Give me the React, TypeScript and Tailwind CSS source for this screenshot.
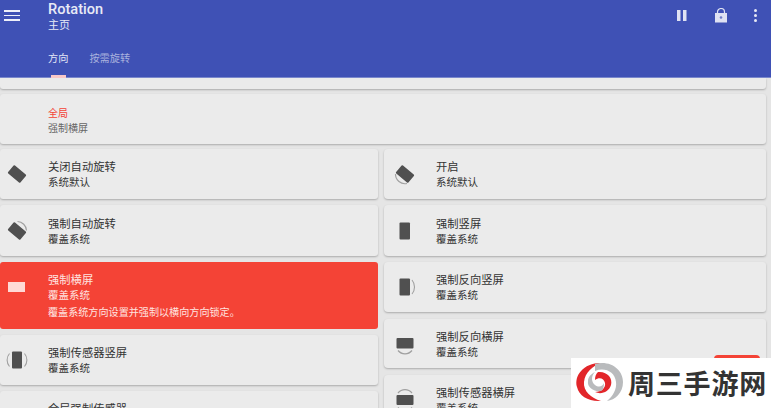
const font = { fontFamily: '"Roboto", "Noto Sans CJK SC", sans-serif' };

function Icon({ kind, light }: { kind: string; light?: boolean }) {
  const c = light ? "#ffd9d6" : "#505050";
  const arc = "#a0a0a0";
  const diamond = <rect x="4" y="6.75" width="16" height="10.5" rx="1" fill={c} transform="rotate(40 12 12)" />;
  return (
    <svg width="24" height="24" viewBox="0 0 24 24" className="shrink-0">
      {kind === "off" && diamond}
      {kind === "auto" && (
        <g>
          <path d="M12.5 2.5A9.5 9.5 0 0 1 21.5 11.5" fill="none" stroke={arc} strokeWidth="1.2" />
          {diamond}
        </g>
      )}
      {kind === "on" && (
        <g>
          <path d="M2.5 12A9.5 9.5 0 0 0 14 21.5" fill="none" stroke={arc} strokeWidth="1.2" />
          {diamond}
        </g>
      )}
      {kind === "land" && <rect x="3" y="7" width="17" height="10" fill={c} />}
      {kind === "port" && <rect x="6.5" y="3.5" width="10.5" height="17" rx="1" fill={c} />}
      {kind === "sport" && (
        <g>
          <rect x="7" y="3.5" width="10" height="17" rx="1" fill={c} />
          <path d="M4.5 5.5a10 10 0 0 0 0 13M19.5 5.5a10 10 0 0 1 0 13" fill="none" stroke={arc} strokeWidth="1.1" />
        </g>
      )}
      {kind === "rport" && (
        <g>
          <rect x="6.5" y="3.5" width="10.5" height="17" rx="1" fill={c} />
          <path d="M19 5a11 11 0 0 1 0 14" fill="none" stroke={arc} strokeWidth="1.1" />
        </g>
      )}
      {kind === "rland" && (
        <g>
          <rect x="3.5" y="6" width="17" height="10.5" rx="1" fill={c} />
          <path d="M5 18.5a9 9 0 0 0 14 0" fill="none" stroke={arc} strokeWidth="1.2" />
        </g>
      )}
      {kind === "sland" && (
        <g>
          <rect x="3.5" y="7" width="17" height="10" rx="1" fill={c} />
          <path d="M5 5a9 9 0 0 1 14 0M5 19.5a9 9 0 0 0 14 0" fill="none" stroke={arc} strokeWidth="1.2" />
        </g>
      )}
    </svg>
  );
}

function Card({
  icon, title, sub, desc, active, right, h,
}: { icon?: string; title: string; sub: string; desc?: string; active?: boolean; right?: boolean; h: string }) {
  return (
    <div
      className={`${h} shrink-0 rounded-[3px] flex flex-col justify-center overflow-hidden ${
        active ? "bg-[#f44336] text-[#ffe3e0]" : "bg-[#ebebeb] text-[#333333] shadow-[0_1px_2px_rgba(0,0,0,0.25)]"
      } ${right ? "rounded-l-[4px]" : ""}`}
    >
      <div className="flex items-center">
        <div className={`shrink-0 flex ${right ? "w-[52px] pl-[9px]" : "w-[48px] pl-[5px]"}`}>
          {icon && <Icon kind={icon} light={active} />}
        </div>
        <div className="flex flex-col pt-[2px]">
          <div className="text-[11.3px] leading-[15px]">{title}</div>
          <div className="text-[10.5px] leading-[15px]">{sub}</div>
        </div>
      </div>
      {desc && <div className="text-[10.1px] leading-[15px] mt-[2px] pl-[48px]">{desc}</div>}
    </div>
  );
}

export default function App() {
  return (
    <div className="relative w-[771px] h-[408px] overflow-hidden bg-[#e5e5e5] flex flex-col" style={font}>
      <header className="h-[78px] shrink-0 bg-[#3f51b5] border-b border-[#7a88cc] flex text-white relative z-10">
        <div className="w-[48px] shrink-0 pl-[4px] pt-[10px]">
          <div className="w-[16px] flex flex-col gap-[3px]">
            <div className="h-[1.5px] bg-[#eef0fa]" />
            <div className="h-[1.5px] bg-[#eef0fa]" />
            <div className="h-[1.5px] bg-[#eef0fa]" />
          </div>
        </div>
        <div className="flex-1 flex flex-col">
          <div className="text-[14.6px] leading-[16px] pt-[1px] font-medium text-[#e8eaf6]">Rotation</div>
          <div className="text-[11px] leading-[16px] mt-[1px] text-[#e8eaf6]">主页</div>
          <div className="flex gap-[21px] mt-[18px] text-[10.2px] leading-[14px]">
            <div className="relative text-[#e3e6f5]">
              方向
              <div className="absolute left-[3px] top-[23px] w-[15px] h-[3px] bg-[#f8c8c8]" />
            </div>
            <div className="text-[#aab2de]">按需旋转</div>
          </div>
        </div>
        <div className="flex items-start pt-[9px] pr-[14px]">
          <svg width="14" height="13" viewBox="0 0 14 13" className="mr-[25px]">
            <rect x="2" y="1" width="3.5" height="11" fill="#dfe2f3" />
            <rect x="8" y="1" width="3.5" height="11" fill="#dfe2f3" />
          </svg>
          <svg width="14" height="16" viewBox="0 0 14 16" className="mr-[26px] -mt-[1px]">
            <path d="M3.5 6V4a3.5 3.5 0 0 1 7 0V6" fill="none" stroke="#dfe2f3" strokeWidth="1.2" />
            <rect x="1" y="5" width="12" height="9.5" fill="#dfe2f3" />
            <circle cx="7" cy="9.5" r="1.3" fill="#6f7dc8" />
          </svg>
          <div className="flex flex-col gap-[2px]">
            <div className="w-[3px] h-[3px] rounded-full bg-[#e8eaf6]" />
            <div className="w-[3px] h-[3px] rounded-full bg-[#e8eaf6]" />
            <div className="w-[3px] h-[3px] rounded-full bg-[#e8eaf6]" />
          </div>
        </div>
      </header>

      <main className="flex-1 min-h-0 flex flex-col pr-[5px]">
        <div className="h-[11px] shrink-0 bg-[#ebebeb] rounded-b-[3px] shadow-[0_1px_2px_rgba(0,0,0,0.25)]" />
        <div className="h-[50px] shrink-0 mt-[5px] bg-[#ebebeb] rounded-[3px] shadow-[0_1px_2px_rgba(0,0,0,0.25)] pl-[48px] pt-[3px] flex flex-col justify-center">
          <div className="text-[10px] leading-[15px] text-[#f44336]">全局</div>
          <div className="text-[10px] leading-[15px] text-[#666666]">强制横屏</div>
        </div>
        <div className="flex gap-[6px] mt-[5px]">
          <div className="w-[378px] shrink-0 flex flex-col gap-[6px]">
            <Card h="h-[50px]" icon="off" title="关闭自动旋转" sub="系统默认" />
            <Card h="h-[51px]" icon="auto" title="强制自动旋转" sub="覆盖系统" />
            <Card h="h-[67px]" icon="land" title="强制横屏" sub="覆盖系统" desc="覆盖系统方向设置并强制以横向方向锁定。" active />
            <Card h="h-[50px]" icon="sport" title="强制传感器竖屏" sub="覆盖系统" />
            <Card h="h-[50px]" title="全局强制传感器" sub="覆盖系统" />
          </div>
          <div className="flex-1 flex flex-col gap-[6px]">
            <Card right h="h-[50px]" icon="on" title="开启" sub="系统默认" />
            <Card right h="h-[51px]" icon="port" title="强制竖屏" sub="覆盖系统" />
            <Card right h="h-[50px]" icon="rport" title="强制反向竖屏" sub="覆盖系统" />
            <div className="mt-[1px]">
              <Card right h="h-[49px]" icon="rland" title="强制反向横屏" sub="覆盖系统" />
            </div>
            <div className="mt-[1px]">
              <Card right h="h-[50px]" icon="sland" title="强制传感器横屏" sub="覆盖系统" />
            </div>
          </div>
        </div>
      </main>

      <div className="absolute left-[714px] top-[355px] w-[46px] h-[20px] rounded-[4px] bg-[#f44336]" />
      <div className="absolute left-[571px] top-[358px] w-[200px] h-[50px] bg-white flex items-center">
        <svg width="57" height="50" viewBox="0 0 57 50" className="shrink-0">
          <path d="M30 5C12 5 3 18 6 29C8 38 18 44 30 43C20 40 12 33 13 24C14 14 22 8 30 5Z" fill="#e2262a" />
          <path d="M24 6C40 2 52 12 52 24C52 35 44 42 36 43C42 38 46 31 45 24C44 14 34 9 24 13Z" fill="#b9bbbd" />
          <path d="M27 14C36 13 42 20 40 27C38 34 30 37 24 34C30 34 35 30 34 25C33 20 28 19 24 22C24 18 25 16 27 14Z" fill="#e2262a" />
          <path d="M30 33C22 34 16 29 17 23C17 19 20 16 24 14C20 18 20 24 24 27C28 30 32 28 33 25C33 29 32 32 30 33Z" fill="#b9bbbd" />
        </svg>
        <div className="text-[27px] leading-[34px] font-bold text-[#333333] tracking-[0.8px] whitespace-nowrap" style={{ fontFamily: '"Noto Sans CJK SC", sans-serif' }}>
          周三手游网
        </div>
      </div>
    </div>
  );
}
